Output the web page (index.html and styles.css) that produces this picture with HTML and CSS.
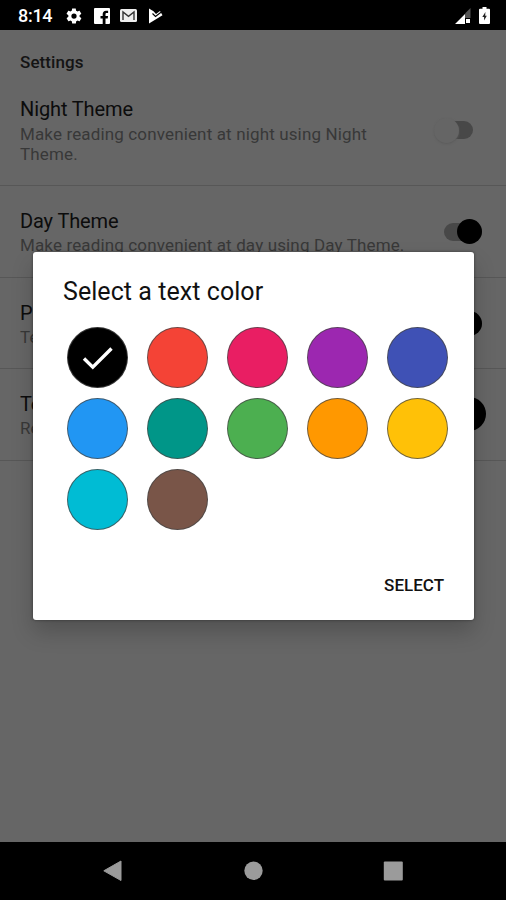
FILE: index.html
```html
<!DOCTYPE html>
<html lang="en">
<head>
<meta charset="utf-8">
<title>Settings</title>
<link rel="stylesheet" href="styles.css">
</head>
<body>
<div class="screen">
  <header class="status">
    <span class="time">8:14</span>
    <svg class="gear" width="18" height="18" viewBox="0 0 24 24"><path fill="#fff" fill-rule="evenodd" d="M19.4 13c.1-.7.1-1.3 0-2l2.1-1.6c.2-.2.3-.5.1-.7l-2-3.4c-.1-.2-.4-.3-.6-.2l-2.5 1c-.5-.4-1.100-.8-1.700-1l-.4-2.600c0-.3-.2-.5-.5-.5h-4c-.3 0-.5.2-.5.5L9 5.100c-.6.200-1.200.6-1.700 1l-2.500-1c-.2-.1-.5 0-.6.2l-2 3.400c-.1.200-.1.500.1.700L4.500 11c-.1.700-.1 1.300 0 2l-2.100 1.600c-.2.200-.3.500-.1.700l2 3.400c.1.200.4.300.6.200l2.500-1c.5.400 1.100.8 1.700 1l.4 2.600c0 .3.200.5.500.5h4c.3 0 .5-.2.500-.5l.4-2.600c.6-.2 1.200-.6 1.700-1l2.500 1c.2.100.5 0 .6-.2l2-3.400c.1-.2.100-.5-.1-.7zM12 15.500a3.500 3.500 0 1 1 0-7 3.500 3.500 0 0 1 0 7z"/></svg>
    <svg class="fb" width="16" height="16" viewBox="0 0 16 16"><path fill="#fff" d="M1 0h14a1 1 0 0 1 1 1v14a1 1 0 0 1-1 1h-3.500v-5.500h2.200l.4-2.500h-2.600V6.300c0-.8.400-1.200 1.200-1.200h1.400V2.700h-2.200C10 2.700 8.700 4 8.700 6v2H6.500v2.500h2.200V16H1a1 1 0 0 1-1-1V1a1 1 0 0 1 1-1z"/></svg>
    <svg class="mail" width="17" height="13" viewBox="0 0 17 13"><rect width="17" height="13" rx="1.500" fill="#eee"/><path d="M3 11V3l5.500 4.300L14 3v8" fill="none" stroke="#333" stroke-width="1.400"/></svg>
    <svg class="play" width="15" height="16" viewBox="0 0 15 16"><path fill="#fff" d="M1 .5l4.500 2.700L8 6l4-3 2.500 4.200L1 15.500z"/><path d="M4.500 5.500l3 3L13 4.300" fill="none" stroke="#000" stroke-width="1.200"/></svg>
    <span class="spacer"></span>
    <svg class="signal" width="16" height="16" viewBox="0 0 16 16"><path fill="#555" d="M15.500 0v10H10V5.500z"/><path fill="#fff" d="M0 16L10 6v10zM11 11h4v4h-4z"/></svg>
    <svg class="battery" width="11" height="17" viewBox="0 0 11 17"><path fill="#fff" d="M3.500 0h4v1.700H10a1 1 0 0 1 1 1V16a1 1 0 0 1-1 1H1a1 1 0 0 1-1-1V2.700a1 1 0 0 1 1-1h2.500z"/><path fill="#222" d="M6.400 5L3.300 9.900h1.800v3.600L7.800 8.800h-1.600z"/></svg>
  </header>
  <main class="settings">
    <h1 class="heading">Settings</h1>
    <section class="row first">
      <div class="copy"><div class="title">Night Theme</div><div class="sub">Make reading convenient at night using Night Theme.</div></div>
      <span class="switch off"></span>
    </section>
    <section class="row">
      <div class="copy"><div class="title">Day Theme</div><div class="sub">Make reading convenient at day using Day Theme.</div></div>
      <span class="switch"></span>
    </section>
    <section class="row">
      <div class="copy"><div class="title">P</div><div class="sub">Te</div></div>
      <span class="switch"></span>
    </section>
    <section class="row">
      <div class="copy"><div class="title">Te</div><div class="sub">Re</div></div>
      <span class="dot"></span>
    </section>
  </main>
  <nav class="nav">
    <svg width="20" height="22" viewBox="0 0 20 22"><path fill="#9b9b9b" d="M18 1v19.500L.8 10.800z" stroke="#9b9b9b" stroke-linejoin="round"/></svg>
    <svg width="20" height="22" viewBox="0 0 20 22"><circle cx="10.500" cy="10.800" r="9.200" fill="#9b9b9b"/></svg>
    <svg width="20" height="22" viewBox="0 0 20 22"><rect x=".8" y="1.500" width="19" height="19" rx="1" fill="#9b9b9b"/></svg>
  </nav>
  <div class="dialog">
    <h2 class="dialog-title">Select a text color</h2>
    <div class="colors">
      <span class="color black"><svg width="60" height="60" viewBox="0 0 60 60"><path d="M16 30.500l8.800 8.700L43.500 20.500" fill="none" stroke="#fff" stroke-width="3.400"/></svg></span>
      <span class="color red"></span>
      <span class="color pink"></span>
      <span class="color purple"></span>
      <span class="color indigo"></span>
      <span class="color blue"></span>
      <span class="color teal"></span>
      <span class="color green"></span>
      <span class="color orange"></span>
      <span class="color amber"></span>
      <span class="color cyan"></span>
      <span class="color brown"></span>
    </div>
    <button class="select">SELECT</button>
  </div>
</div>
</body>
</html>
```
FILE: styles.css
```css
* { box-sizing: border-box; }
body { margin: 0; font-family: Roboto, sans-serif; }
.screen {
  position: relative;
  display: flex;
  flex-direction: column;
  width: 506px;
  height: 900px;
  overflow: hidden;
  background: #666;
}
.status {
  display: flex;
  align-items: center;
  height: 30px;
  padding: 1px 16px 0 18px;
  background: #000;
  color: #fff;
}
.time { width: 47px; font-size: 18px; font-weight: 500; line-height: 30px; letter-spacing: -.3px; }
.fb { margin-left: 11px; }
.mail { margin-left: 10px; }
.play { margin-left: 11px; }
.spacer { flex: 1; }
.battery { margin-left: 8px; }
.settings { flex: 1; }
.heading {
  margin: 0;
  padding: 21px 20px 0;
  font-size: 17px;
  font-weight: 500;
  line-height: 22px;
  letter-spacing: .1px;
  color: #141414;
}
.row {
  display: flex;
  height: 91.5px;
  padding: 23px 20px 0;
  border-bottom: 1px solid #575757;
}
.row.first { height: 113px; padding-top: 24px; }
.copy { width: 395px; }
.first .copy { width: 360px; }
.title { font-size: 20px; line-height: 24px; color: #0c0c0c; letter-spacing: -.12px; }
.sub { margin-top: 2px; font-size: 17px; line-height: 20px; letter-spacing: .14px; color: #383838; }
.first .sub { margin-top: 3px; }
.switch {
  position: relative;
  width: 38px;
  height: 18px;
  margin: 14px 0 0 29px;
  border-radius: 9px;
  background: #484848;
}
.switch::after {
  content: "";
  position: absolute;
  top: -4px;
  right: 0;
  width: 25px;
  height: 25px;
  border-radius: 50%;
  background: #000;
}
.switch.off { width: 38px; margin: 24px 0 0 55px; }
.switch.off::after { top: -3px; right: auto; left: -1px; background: #656565; box-shadow: 0 1px 2px #5c5c5c; }
.dot { width: 34px; height: 34px; margin: 5px 0 0 37px; border-radius: 50%; background: #000; flex: none; }
.nav {
  display: flex;
  justify-content: space-between;
  align-items: center;
  height: 58px;
  padding: 0 103px;
  background: #000;
}
.dialog {
  position: absolute;
  left: 33px;
  top: 252px;
  width: 441px;
  height: 368px;
  padding: 25px 30px 0;
  border-radius: 3px;
  background: #fff;
  box-shadow: 0 12px 22px rgba(0,0,0,.2), 0 0 3px rgba(0,0,0,.45);
  display: flex;
  flex-direction: column;
}
.dialog-title { margin: 0; font-size: 25px; font-weight: 400; line-height: 30px; letter-spacing: .06px; color: #111; }
.colors {
  display: grid;
  grid-template-columns: repeat(5, 61px);
  grid-auto-rows: 61px;
  gap: 10.3px 19px;
  margin: 19.6px 0 0 3.500px;
}
.color { border: 1px solid rgba(70,70,70,.75); border-radius: 50%; overflow: hidden; }
.color svg { display: block; }
.black { background: #000; }
.red { background: #f44336; }
.pink { background: #e91e63; }
.purple { background: #9c27b0; }
.indigo { background: #3f51b5; }
.blue { background: #2196f3; }
.teal { background: #009688; }
.green { background: #4caf50; }
.orange { background: #ff9800; }
.amber { background: #ffc107; }
.cyan { background: #00bcd4; }
.brown { background: #795548; }
.select {
  align-self: flex-end;
  margin: 42.4px 0 0;
  padding: 0;
  border: 0;
  background: none;
  font: 500 17px/24px Roboto, sans-serif;
  color: #111;
}
```
